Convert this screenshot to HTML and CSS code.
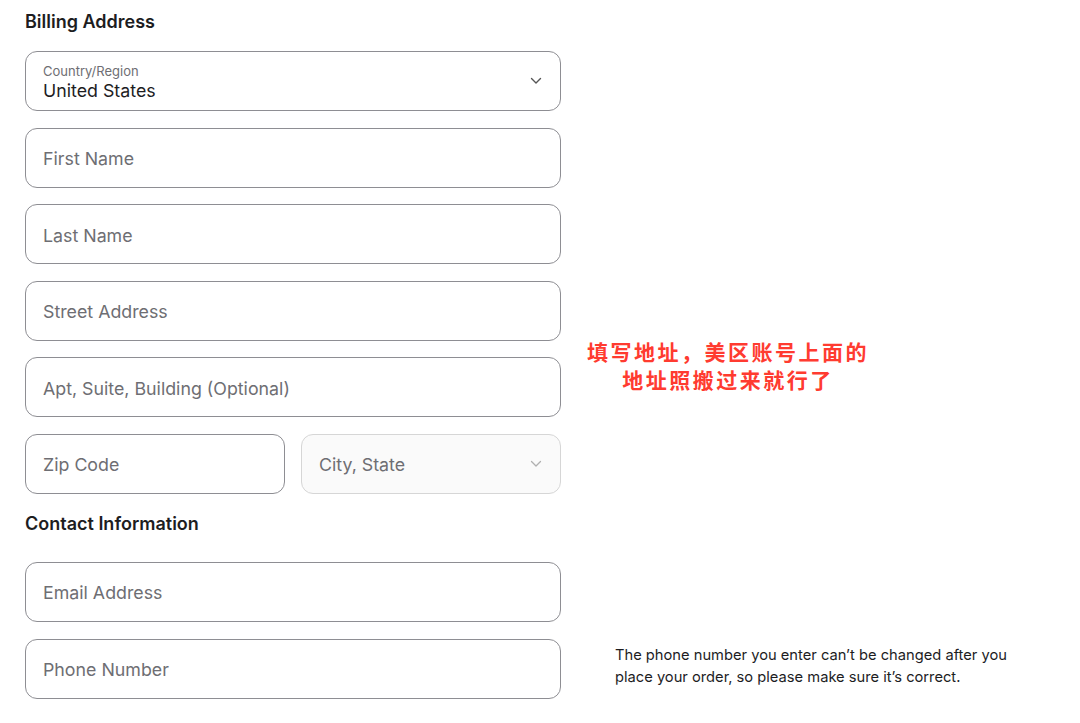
FILE: index.html
```html
<!DOCTYPE html>
<html lang="en">
<head>
<meta charset="utf-8">
<link rel="stylesheet" href="styles.css">
</head>
<body>
<main class="page">
  <section class="form">
    <h2 class="heading">Billing Address</h2>
    <div class="fields">
      <div class="field select">
        <div class="select-text">
          <span class="label">Country/Region</span>
          <span class="value">United States</span>
        </div>
        <svg class="chev" width="12" height="8" viewBox="0 0 12 8"><path d="M1.5 1.5 L6 6 L10.5 1.5" fill="none" stroke="#555" stroke-width="1.4" stroke-linecap="round" stroke-linejoin="round"/></svg>
      </div>
      <div class="field"><span class="ph">First Name</span></div>
      <div class="field"><span class="ph">Last Name</span></div>
      <div class="field"><span class="ph">Street Address</span></div>
      <div class="field"><span class="ph">Apt, Suite, Building (Optional)</span></div>
      <div class="pair">
        <div class="field"><span class="ph">Zip Code</span></div>
        <div class="field select disabled">
          <span class="ph">City, State</span>
          <svg class="chev" width="12" height="8" viewBox="0 0 12 8"><path d="M1.5 1.5 L6 6 L10.5 1.5" fill="none" stroke="#b0b0b0" stroke-width="1.3" stroke-linecap="round" stroke-linejoin="round"/></svg>
        </div>
      </div>
    </div>
    <h2 class="heading contact">Contact Information</h2>
    <div class="fields">
      <div class="field"><span class="ph">Email Address</span></div>
      <div class="row">
        <div class="field"><span class="ph">Phone Number</span></div>
        <p class="note">The phone number you enter can’t be changed after you place your order, so please make sure it’s correct.</p>
      </div>
    </div>
  </section>
  <p class="annot">填写地址，美区账号上面的<br>地址照搬过来就行了</p>
</main>
</body>
</html>
```

FILE: styles.css
```css
* { box-sizing: border-box; }
html, body { margin: 0; padding: 0; background: #fff; }
body {
  font-family: Inter, "Noto Sans", "Liberation Sans", sans-serif;
  color: #1d1d1f;
}
.page {
  position: relative;
  width: 1080px;
  height: 723px;
  padding-left: 25px;
  padding-top: 10px;
}
.form { width: 536px; }
.heading {
  margin: 0;
  font-size: 18px;
  line-height: 24px;
  font-weight: 600;
  color: #1d1d1f;
}
.fields {
  display: flex;
  flex-direction: column;
  gap: 16.6px;
  margin-top: 17px;
}
.contact { margin-top: 18px; }
.contact + .fields { margin-top: 26px; }
.field {
  height: 60px;
  border: 1px solid #8e8e93;
  border-radius: 12px;
  display: flex;
  align-items: center;
  padding: 2px 17px 0;
  background: #fff;
  flex: 0 0 auto;
  width: 536px;
}
.ph {
  font-size: 17.8px;
  color: #6e6e73;
}
.select { justify-content: space-between; }
.select-text { display: flex; flex-direction: column; padding-top: 1px; }
.label { font-size: 13px; color: #6e6e73; line-height: 16px; }
.value { font-size: 17.8px; color: #1d1d1f; line-height: 24px; }
.chev { margin-right: 1px; margin-bottom: 2px; }
.pair { display: flex; gap: 16px; }
.pair .field { width: 260px; }
.disabled { background: #fafafa; border-color: #d6d6d6; }
.row { display: flex; align-items: center; gap: 54px; }
.note {
  margin: 0;
  width: 420px;
  flex: 0 0 auto;
  font-size: 14.7px;
  line-height: 22px;
  color: #1d1d1f;
  padding-bottom: 5px;
}
.annot {
  position: absolute;
  left: 560px;
  top: 337px;
  width: 336px;
  margin: 0;
  text-align: center;
  font-family: "Noto Sans CJK SC", sans-serif;
  font-weight: 700;
  font-size: 21px;
  line-height: 28px;
  letter-spacing: 2.5px;
  color: #ff3b30;
}
```
